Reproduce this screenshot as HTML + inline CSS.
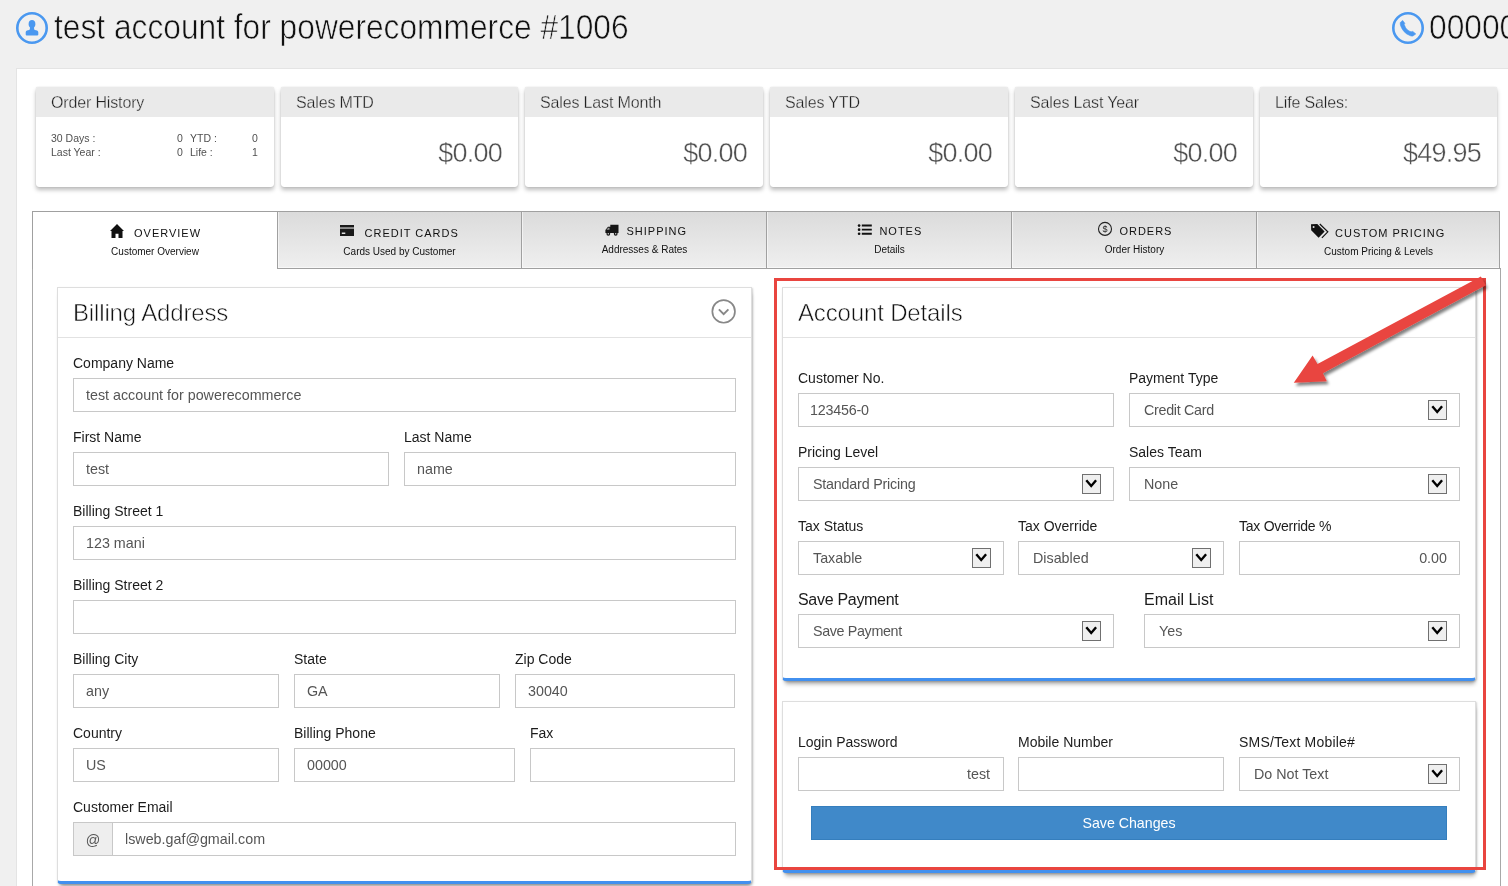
<!DOCTYPE html>
<html>
<head>
<meta charset="utf-8">
<title>Customer</title>
<style>
*{box-sizing:border-box;margin:0;padding:0}
html,body{width:1508px;height:886px;overflow:hidden}
body{will-change:transform;background:#f0f0f0;font-family:"Liberation Sans",sans-serif;color:#222;position:relative}
.abs{position:absolute}
.title{position:absolute;left:53.500px;top:8px;font-size:35px;line-height:38px;color:#111;white-space:nowrap;-webkit-text-stroke:0.65px #f0f0f0;transform:scaleX(0.906);transform-origin:0 0}
.phone{position:absolute;left:1428.500px;top:8px;font-size:35px;line-height:38px;color:#111;white-space:nowrap;-webkit-text-stroke:0.65px #f0f0f0;transform:scaleX(0.906);transform-origin:0 0}
.main{position:absolute;left:16px;top:68px;width:1500px;height:830px;background:#fff;border:1px solid #e4e4e4}
/* stat cards */
.card{position:absolute;top:87px;width:238px;height:100px;background:#fff;border-radius:2px 2px 3px 3px;box-shadow:0 3px 4px rgba(0,0,0,.26),0 0 1px rgba(0,0,0,.25);overflow:hidden}
.card .h{height:30px;background:#eaeaea;font-size:16px;line-height:31px;padding-left:15px;color:#222;letter-spacing:-0.15px;-webkit-text-stroke:0.3px #ebebeb}
.card .v{position:absolute;right:16px;top:49px;font-size:27px;line-height:34px;color:#505050;letter-spacing:-0.75px;-webkit-text-stroke:0.4px #fff}
.sm{position:absolute;font-size:10.5px;line-height:14px;color:#505050;white-space:nowrap}
/* tabs */
.tabs{position:absolute;left:32px;top:211px;width:1469px;height:58px}
.tab{position:absolute;top:0;height:58px;width:246px;border:1px solid #a0a0a0;border-left:none;background:linear-gradient(#dbdbdb,#efefef);text-align:center;box-shadow:inset 1px -1px 0 rgba(255,255,255,.55)}
.tab.on{background:#fff;border-left:1px solid #a0a0a0;border-bottom:none;box-shadow:none}
.tt{position:absolute;font-size:11px;line-height:16px;letter-spacing:1px;color:#111;white-space:nowrap}
.ts{position:absolute;font-size:10px;line-height:12px;color:#111;white-space:nowrap;text-align:center}
.tabbody{position:absolute;left:32px;top:268px;width:1469px;height:700px;border:1px solid #a8a8a8;border-top:1px solid #a0a0a0}
/* panels */
.panel{position:absolute;background:#fff;border:1px solid #dedede;border-bottom:3px solid #4290ef;border-radius:0 0 4px 4px;box-shadow:1px 1px 2px rgba(0,0,0,.18),1px 5px 4px -2px rgba(0,0,0,.32)}
.ph{position:absolute;left:0;right:0;top:0;height:50px;border-bottom:1px solid #e2e2e2}
.ph span{position:absolute;left:15px;top:10px;font-size:24px;line-height:30px;color:#111;letter-spacing:-0.15px;white-space:nowrap;-webkit-text-stroke:0.55px #fff}
.lb{position:absolute;font-size:14px;line-height:18px;color:#1c1c1c;white-space:nowrap}
.lb.big{font-size:16px;line-height:20px}
.in{position:absolute;height:34px;border:1px solid #c8c8c8;background:#fff;font-size:14.3px;line-height:32px;color:#555;padding:0 12px;white-space:nowrap;overflow:hidden}
.in.r{text-align:right;padding-right:12px}
.sel{padding-left:14px}
.dd{position:absolute;right:12px;top:6px;width:19px;height:20px;background:#efefef;border:1px solid #707070}
.dd svg{position:absolute;left:-1px;top:-1px}
.btn{position:absolute;left:811px;top:806px;width:636px;height:34px;background:#4089c9;color:#fff;font-size:14.2px;line-height:32px;text-align:center;border:1px solid #357ebd}
</style>
</head>
<body>
<!-- header -->
<svg class="abs" style="left:15px;top:11px" width="34" height="34" viewBox="0 0 34 34"><circle cx="17" cy="17" r="14.7" fill="none" stroke="#4a98f0" stroke-width="2.6"/><path transform="translate(0 0.800)" d="M17 8.3c2.1 0 3.4 1.6 3.4 3.8 0 1.4-.5 2.7-1.3 3.4v1.6c0 .5.3.8.8 1l2.2.7c.8.3 1.2.9 1.2 1.7v2.3c0 .5-.4.9-.9.9H11.600c-.5 0-.9-.4-.9-.9v-2.300c0-.8.4-1.400 1.200-1.700l2.200-.7c.5-.2.8-.5.8-1v-1.600c-.8-.7-1.300-2-1.300-3.400 0-2.200 1.300-3.800 3.400-3.800z" fill="#4a98f0"/></svg>
<div class="title">test account for powerecommerce #1006</div>
<svg class="abs" style="left:1391px;top:11px" width="34" height="34" viewBox="0 0 34 34"><circle cx="17" cy="17" r="14.7" fill="none" stroke="#4a98f0" stroke-width="2.6"/><path d="M9.300 11.500L11.650 9.400L13.800 12.300L13.200 13.600Q14.600 17.500 16.300 18.700Q18 20.200 20.100 20.800L21.800 20.400L24.800 22.900L21.800 25.100Q20.300 25.200 18.900 24.600Q15 22.900 12.900 20.400Q10.600 17.600 9.500 14.500Q9.100 13 9.300 11.500Z" fill="#4a98f0" stroke="#4a98f0" stroke-width="0.600" stroke-linejoin="round"/></svg>
<div class="phone">00000</div>

<div class="main"></div>

<!-- stat cards -->
<div class="card" style="left:36px"><div class="h">Order History</div></div>
<div class="sm" style="left:51px;top:131px">30 Days :</div>
<div class="sm" style="left:51px;top:145px">Last Year :</div>
<div class="sm" style="left:177px;top:131px">0</div>
<div class="sm" style="left:177px;top:145px">0</div>
<div class="sm" style="left:190px;top:131px">YTD :</div>
<div class="sm" style="left:190px;top:145px">Life :</div>
<div class="sm" style="left:252px;top:131px">0</div>
<div class="sm" style="left:252px;top:145px">1</div>
<div class="card" style="left:281px;width:237px"><div class="h">Sales MTD</div><div class="v">$0.00</div></div>
<div class="card" style="left:525px"><div class="h">Sales Last Month</div><div class="v">$0.00</div></div>
<div class="card" style="left:770px"><div class="h">Sales YTD</div><div class="v">$0.00</div></div>
<div class="card" style="left:1015px"><div class="h">Sales Last Year</div><div class="v">$0.00</div></div>
<div class="card" style="left:1260px;width:237px"><div class="h">Life Sales:</div><div class="v">$49.95</div></div>

<!-- tabs -->
<div class="tabbody"></div>
<div class="tabs">
  <div class="tab on" style="left:0;width:246px"></div>
  <div class="tab" style="left:246px;width:244px"></div>
  <div class="tab" style="left:490px;width:245px"></div>
  <div class="tab" style="left:735px;width:245px"></div>
  <div class="tab" style="left:980px;width:245px"></div>
  <div class="tab" style="left:1225px;width:243px"></div>
</div>
<!-- tab icons -->
<svg class="abs" style="left:110px;top:224px" width="14" height="14" viewBox="0 0 14 14"><path d="M7 0L0 7h1.500v7h4v-4.300h3V14h4V7H14z" fill="#111"/></svg>
<svg class="abs" style="left:340px;top:225px" width="14" height="11" viewBox="0 0 14 11"><path d="M0 0h14v2.600H0zM0 3.800h14V11H0zM1.800 7.600v1.500h3.500V7.600z" fill="#1a1a1a" fill-rule="evenodd"/><rect x="0" y="2.600" width="14" height="1.200" fill="#888"/></svg>
<svg class="abs" style="left:605px;top:224px" width="14" height="12" viewBox="0 0 14 12"><path d="M5.300 .8h8.200v8.200H5.300zM5.300 2.800H3L.4 6v3h4.900z" fill="#151515"/><circle cx="3.300" cy="9.800" r="1.900" fill="#151515"/><circle cx="10.700" cy="9.800" r="1.900" fill="#151515"/><circle cx="3.300" cy="9.800" r=".7" fill="#ddd"/><circle cx="10.700" cy="9.800" r=".7" fill="#ddd"/><path d="M1.500 5.800L3.200 3.700h1.300v2.100z" fill="#999"/></svg>
<svg class="abs" style="left:857px;top:224px" width="16" height="12" viewBox="0 0 16 12"><path d="M4.800 .6h10v1.900h-10zM4.800 4.700h10v1.900h-10zM4.800 8.800h10v1.900h-10z" fill="#111"/><circle cx="2.100" cy="1.550" r="1.350" fill="#111"/><circle cx="2.100" cy="5.650" r="1.350" fill="#111"/><circle cx="2.100" cy="9.750" r="1.350" fill="#111"/></svg>
<svg class="abs" style="left:1097px;top:221px" width="16" height="16" viewBox="0 0 16 16"><circle cx="8" cy="7.900" r="6.500" fill="none" stroke="#222" stroke-width="1.100"/><text x="8" y="11.100" font-family="Liberation Sans" font-size="9" text-anchor="middle" fill="#222">$</text></svg>
<svg class="abs" style="left:1310px;top:223px" width="20" height="16" viewBox="0 0 20 16"><path d="M1 1.300l6.300-.3 7.300 7.600-6 6.200L1.200 7.300z M3.600 2.900a1 1 0 100 2 1 1 0 000-2z" fill="#111" fill-rule="evenodd"/><path d="M9.800 1l8 7.800-5.900 6" fill="none" stroke="#111" stroke-width="1.200"/></svg>
<!-- tab text -->
<div class="tt" style="left:134px;top:225px">OVERVIEW</div>
<div class="ts" style="left:33px;width:244px;top:245.500px">Customer Overview</div>
<div class="tt" style="left:364.500px;top:225px">CREDIT CARDS</div>
<div class="ts" style="left:277px;width:245px;top:245.500px">Cards Used by Customer</div>
<div class="tt" style="left:626.500px;top:223px">SHIPPING</div>
<div class="ts" style="left:522px;width:245px;top:243.500px">Addresses &amp; Rates</div>
<div class="tt" style="left:879.400px;top:223px">NOTES</div>
<div class="ts" style="left:767px;width:245px;top:243.500px">Details</div>
<div class="tt" style="left:1119.400px;top:223px">ORDERS</div>
<div class="ts" style="left:1012px;width:245px;top:243.500px">Order History</div>
<div class="tt" style="left:1335px;top:225px">CUSTOM PRICING</div>
<div class="ts" style="left:1257px;width:243px;top:245.500px">Custom Pricing &amp; Levels</div>

<!-- Billing panel -->
<div class="panel" style="left:57px;top:287px;width:695px;height:597px"><div class="ph"><span>Billing Address</span></div></div>
<svg class="abs" style="left:710px;top:298px" width="28" height="28" viewBox="0 0 28 28"><circle cx="13.650" cy="13.450" r="11.300" fill="none" stroke="#888" stroke-width="1.700"/><path d="M8.900 11.300l4.750 4.900 4.750-4.900" fill="none" stroke="#888" stroke-width="1.900"/></svg>

<div class="lb" style="left:73px;top:354px">Company Name</div>
<div class="in" style="left:73px;top:378px;width:663px">test account for powerecommerce</div>
<div class="lb" style="left:73px;top:428px">First Name</div>
<div class="lb" style="left:404px;top:428px">Last Name</div>
<div class="in" style="left:73px;top:452px;width:316px">test</div>
<div class="in" style="left:404px;top:452px;width:332px">name</div>
<div class="lb" style="left:73px;top:502px">Billing Street 1</div>
<div class="in" style="left:73px;top:526px;width:663px">123 mani</div>
<div class="lb" style="left:73px;top:576px">Billing Street 2</div>
<div class="in" style="left:73px;top:600px;width:663px"></div>
<div class="lb" style="left:73px;top:650px">Billing City</div>
<div class="lb" style="left:294px;top:650px">State</div>
<div class="lb" style="left:515px;top:650px">Zip Code</div>
<div class="in" style="left:73px;top:674px;width:206px">any</div>
<div class="in" style="left:294px;top:674px;width:206px">GA</div>
<div class="in" style="left:515px;top:674px;width:220px">30040</div>
<div class="lb" style="left:73px;top:724px">Country</div>
<div class="lb" style="left:294px;top:724px">Billing Phone</div>
<div class="lb" style="left:530px;top:724px">Fax</div>
<div class="in" style="left:73px;top:748px;width:206px">US</div>
<div class="in" style="left:294px;top:748px;width:221px">00000</div>
<div class="in" style="left:530px;top:748px;width:205px"></div>
<div class="lb" style="left:73px;top:798px">Customer Email</div>
<div class="in" style="left:73px;top:822px;width:40px;background:#eee;text-align:center;padding:0;line-height:34px">@</div>
<div class="in" style="left:112px;top:822px;width:624px">lsweb.gaf@gmail.com</div>

<!-- Account panel -->
<div class="panel" style="left:782px;top:287px;width:694px;height:394px"><div class="ph"><span>Account Details</span></div></div>
<div class="lb" style="left:798px;top:369px">Customer No.</div>
<div class="lb" style="left:1129px;top:369px">Payment Type</div>
<div class="in" style="left:798px;top:393px;width:316px;letter-spacing:-0.2px;padding-left:11px">123456-0</div>
<div class="in sel" style="left:1129px;top:393px;width:331px;letter-spacing:-0.3px">Credit Card<div class="dd"><svg width="19" height="20" viewBox="0 0 19 20"><path d="M4.300 6.300L9.200 12L14.100 6.300" fill="none" stroke="#000" stroke-width="2.400" stroke-linejoin="miter"/></svg></div></div>
<div class="lb" style="left:798px;top:443px">Pricing Level</div>
<div class="lb" style="left:1129px;top:443px">Sales Team</div>
<div class="in sel" style="left:798px;top:467px;width:316px;letter-spacing:-0.2px">Standard Pricing<div class="dd"><svg width="19" height="20" viewBox="0 0 19 20"><path d="M4.300 6.300L9.200 12L14.100 6.300" fill="none" stroke="#000" stroke-width="2.400" stroke-linejoin="miter"/></svg></div></div>
<div class="in sel" style="left:1129px;top:467px;width:331px">None<div class="dd"><svg width="19" height="20" viewBox="0 0 19 20"><path d="M4.300 6.300L9.200 12L14.100 6.300" fill="none" stroke="#000" stroke-width="2.400" stroke-linejoin="miter"/></svg></div></div>
<div class="lb" style="left:798px;top:517px">Tax Status</div>
<div class="lb" style="left:1018px;top:517px">Tax Override</div>
<div class="lb" style="left:1239px;top:517px;letter-spacing:-0.25px">Tax Override %</div>
<div class="in sel" style="left:798px;top:541px;width:206px">Taxable<div class="dd"><svg width="19" height="20" viewBox="0 0 19 20"><path d="M4.300 6.300L9.200 12L14.100 6.300" fill="none" stroke="#000" stroke-width="2.400" stroke-linejoin="miter"/></svg></div></div>
<div class="in sel" style="left:1018px;top:541px;width:206px">Disabled<div class="dd"><svg width="19" height="20" viewBox="0 0 19 20"><path d="M4.300 6.300L9.200 12L14.100 6.300" fill="none" stroke="#000" stroke-width="2.400" stroke-linejoin="miter"/></svg></div></div>
<div class="in r" style="left:1239px;top:541px;width:221px">0.00</div>
<div class="lb big" style="left:798px;top:590px;letter-spacing:-0.3px">Save Payment</div>
<div class="lb big" style="left:1144px;top:590px">Email List</div>
<div class="in sel" style="left:798px;top:614px;width:316px;letter-spacing:-0.35px">Save Payment<div class="dd"><svg width="19" height="20" viewBox="0 0 19 20"><path d="M4.300 6.300L9.200 12L14.100 6.300" fill="none" stroke="#000" stroke-width="2.400" stroke-linejoin="miter"/></svg></div></div>
<div class="in sel" style="left:1144px;top:614px;width:316px">Yes<div class="dd"><svg width="19" height="20" viewBox="0 0 19 20"><path d="M4.300 6.300L9.200 12L14.100 6.300" fill="none" stroke="#000" stroke-width="2.400" stroke-linejoin="miter"/></svg></div></div>

<!-- Login panel -->
<div class="panel" style="left:782px;top:701px;width:694px;height:172px"></div>
<div class="lb" style="left:798px;top:733px">Login Password</div>
<div class="lb" style="left:1018px;top:733px">Mobile Number</div>
<div class="lb" style="left:1239px;top:733px;letter-spacing:0.2px">SMS/Text Mobile#</div>
<div class="in r" style="left:798px;top:757px;width:206px;padding-right:13px">test</div>
<div class="in" style="left:1018px;top:757px;width:206px"></div>
<div class="in sel" style="left:1239px;top:757px;width:221px">Do Not Text<div class="dd"><svg width="19" height="20" viewBox="0 0 19 20"><path d="M4.300 6.300L9.200 12L14.100 6.300" fill="none" stroke="#000" stroke-width="2.400" stroke-linejoin="miter"/></svg></div></div>
<div class="btn">Save Changes</div>

<!-- annotation -->
<svg class="abs" style="left:0;top:0;pointer-events:none" width="1508" height="886" viewBox="0 0 1508 886">
  <defs><filter id="sh" x="-10%" y="-10%" width="130%" height="130%"><feGaussianBlur in="SourceAlpha" stdDeviation="1.800"/><feOffset dx="1.500" dy="3"/><feComponentTransfer><feFuncA type="linear" slope="0.5"/></feComponentTransfer><feMerge><feMergeNode/><feMergeNode in="SourceGraphic"/></feMerge></filter></defs>
  <rect x="775.500" y="279.500" width="709" height="589" fill="none" stroke="#e9453f" stroke-width="3"/>
  <path d="M1293.800 382.700L1312.600 355.400L1317.500 364L1480.900 276.600L1485.600 285.200L1322.900 373.200L1326.800 381.300Z" fill="#e9453f" filter="url(#sh)"/>
</svg>
</body>
</html>
